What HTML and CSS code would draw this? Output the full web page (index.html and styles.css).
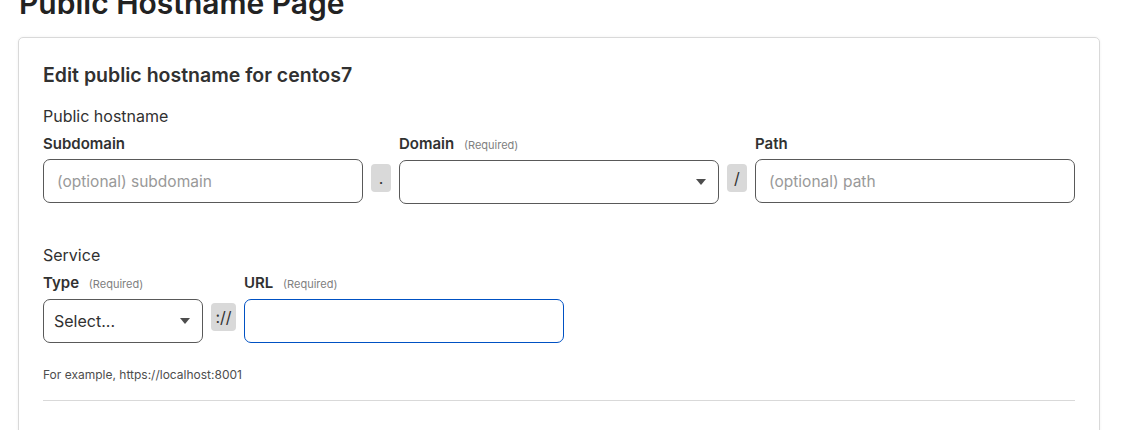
FILE: index.html
```html
<!DOCTYPE html>
<html lang="en">
<head>
<meta charset="utf-8">
<title>Public Hostname Page</title>
<link rel="stylesheet" href="styles.css">
</head>
<body>
<h1 class="page-title">Public Hostname Page</h1>
<section class="card">
  <h2 class="card-title">Edit public hostname for centos7</h2>

  <div class="group-title">Public hostname</div>
  <div class="row">
    <div class="field w320">
      <div class="label">Subdomain</div>
      <div class="input placeholder">(optional) subdomain</div>
    </div>
    <div class="sep">.</div>
    <div class="field w320">
      <div class="label">Domain <span class="req">(Required)</span></div>
      <div class="input select">
        <span></span>
        <svg class="caret" width="10" height="6" viewBox="0 0 10 6"><path d="M0 0h10L5 6z" fill="#4d4d4d"/></svg>
      </div>
    </div>
    <div class="sep">/</div>
    <div class="field w320">
      <div class="label">Path</div>
      <div class="input placeholder">(optional) path</div>
    </div>
  </div>

  <div class="group-title service">Service</div>
  <div class="row">
    <div class="field w160">
      <div class="label">Type <span class="req">(Required)</span></div>
      <div class="input select">
        <span>Select...</span>
        <svg class="caret" width="10" height="6" viewBox="0 0 10 6"><path d="M0 0h10L5 6z" fill="#4d4d4d"/></svg>
      </div>
    </div>
    <div class="sep wide">://</div>
    <div class="field w320">
      <div class="label">URL <span class="req">(Required)</span></div>
      <div class="input focus"></div>
    </div>
  </div>
  <p class="hint">For example, https://localhost:8001</p>
  <hr class="divider">
</section>
</body>
</html>
```
FILE: styles.css
```css
* { box-sizing: border-box; }
body {
  margin: 0;
  padding: 0 45px 0 18px;
  font-family: Inter, "Noto Sans", sans-serif;
  color: #313131;
  background: #fff;
}
.page-title {
  margin: -15px 0 16px 1px;
  font-size: 30px;
  line-height: 36px;
  font-weight: 600;
  color: #222;
}
.card {
  border: 1px solid #d9d9d9;
  border-radius: 5px;
  box-shadow: 0 0 3px rgba(0,0,0,0.06);
  padding: 25px 24px 60px;
}
.card-title {
  margin: 0;
  font-size: 19.5px;
  line-height: 24px;
  font-weight: 600;
}
.group-title {
  margin-top: 17px;
  font-size: 16px;
  line-height: 24px;
}
.group-title.service { margin-top: 39px; }
.row {
  display: flex;
  gap: 8px;
  margin-top: 6px;
}
.field { display: flex; flex-direction: column; gap: 5px; }
.w320 { width: 320px; }
.w160 { width: 160px; }
.label {
  font-size: 15px;
  line-height: 20px;
  font-weight: 600;
}
.req {
  font-size: 11px;
  font-weight: 400;
  color: #808080;
  margin-left: 6px;
}
.input {
  height: 44px;
  border: 1px solid #595959;
  border-radius: 7px;
  padding: 0 13px;
  display: flex;
  align-items: center;
  font-size: 16px;
}
.placeholder { color: #999; font-size: 15.5px; }
.select { justify-content: space-between; padding: 0 12px 0 10px; }
.focus { border-color: #0051c3; }
.sep {
  align-self: flex-end;
  margin-bottom: 12px;
  width: 20px;
  height: 28px;
  border-radius: 4px;
  background: #d9d9d9;
  display: flex;
  align-items: center;
  justify-content: center;
  font-size: 16px;
  color: #313131;
}
.sep.wide { width: 25px; }
.hint {
  margin: 24px 0 0;
  font-size: 12px;
  line-height: 16px;
  color: #4d4d4d;
}
.divider {
  margin: 17px 0 0;
  border: 0;
  border-top: 1px solid #d9d9d9;
}
```
